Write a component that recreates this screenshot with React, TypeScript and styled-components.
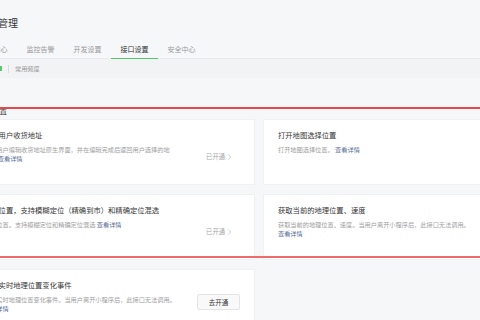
import React from 'react';
import styled, { createGlobalStyle, css } from 'styled-components';

const GlobalStyle = createGlobalStyle`
  html, body {
    margin: 0;
    padding: 0;
    background: #f6f7f9;
  }
  body {
    font-family: "Noto Sans CJK SC", "Noto Sans", sans-serif;
  }
`;

const Viewport = styled.div`
  position: relative;
  width: 480px;
  height: 320px;
  overflow: hidden;
  background: #f6f7f9;
`;

const Page = styled.div`
  margin-left: -30px;
  width: 580px;
`;

const Header = styled.header`
  padding-top: 15px;
`;

const Title = styled.h1`
  margin: 0 0 10px 8px;
  font-size: 10px;
  line-height: 15px;
  font-weight: 400;
  color: #333;
`;

const Tabs = styled.nav`
  display: flex;
  border-bottom: 1px solid #e8e9ec;
`;

const Tab = styled.div<{ $active?: boolean }>`
  position: relative;
  padding: 0 9.5px;
  height: 18px;
  line-height: 18px;
  font-size: 7px;
  color: ${(p) => (p.$active ? '#333' : '#9a9a9a')};
  ${(p) =>
    p.$active &&
    css`
      &::after {
        content: '';
        position: absolute;
        left: 0;
        right: 0;
        bottom: -1px;
        height: 1.5px;
        background: #56c46b;
      }
    `}
`;

const SubBar = styled.div`
  display: flex;
  align-items: center;
  height: 19px;
  padding-left: 28px;
  background: #f2f3f5;
`;

const Mark = styled.span`
  width: 4px;
  height: 5px;
  background: #5cc56d;
`;

const Divider = styled.span`
  width: 1px;
  height: 8px;
  margin-left: 6px;
  background: #dcdde0;
`;

const SubLabel = styled.span`
  margin-left: 6px;
  font-size: 6.2px;
  color: #999;
`;

const Section = styled.section`
  padding-top: 27.5px;
`;

const SectionTitle = styled.h2`
  margin: 0 0 4.5px 7px;
  font-size: 7.5px;
  line-height: 10px;
  font-weight: 400;
  color: #333;
`;

const Grid = styled.div`
  display: grid;
  grid-template-columns: 284px 284px;
  grid-auto-rows: 64px;
  column-gap: 10px;
  row-gap: 11px;
`;

const Card = styled.div`
  display: flex;
  justify-content: space-between;
  align-items: flex-start;
  padding: 9.5px 14px 0 14px;
  background: #fff;
  box-shadow: 0 0 0 1px rgba(0, 0, 0, 0.025);
`;

const Body = styled.div`
  width: 195px;
  flex: none;
`;

const CardTitle = styled.div`
  font-size: 7.3px;
  line-height: 10px;
  color: #353535;
  white-space: nowrap;
`;

const Desc = styled.div`
  margin-top: 5.5px;
  font-size: 6.2px;
  line-height: 9px;
  color: #a0a0a0;
`;

const More = styled.a`
  color: #576b95;
  text-decoration: none;
`;

const Status = styled.div`
  align-self: center;
  display: flex;
  align-items: center;
  gap: 3px;
  margin-right: 9px;
  font-size: 6.3px;
  color: #a6a6a6;
`;

const OpenButton = styled.button`
  align-self: center;
  width: 43px;
  height: 16px;
  margin-top: -9.5px;
  padding: 0;
  border: 1px solid #e3e4e6;
  border-radius: 2px;
  background: #f9f9fa;
  font-family: inherit;
  font-size: 6.5px;
  color: #333;
`;

const RedLine = styled.div<{ $top: number; $h: number; $color: string }>`
  position: absolute;
  left: 0;
  right: 0;
  top: ${(p) => p.$top}px;
  height: ${(p) => p.$h}px;
  background: ${(p) => p.$color};
`;

const Chevron = () => (
  <svg width="3" height="6" viewBox="0 0 3 6" fill="none">
    <polyline points="0.4,0.4 2.6,3 0.4,5.6" stroke="#b0b0b0" strokeWidth="0.6" />
  </svg>
);

type Api = {
  title: string;
  desc: string;
  state: 'open' | 'closed' | 'none';
};

const apis: Api[] = [
  {
    title: '获取用户收货地址',
    desc: '调起用户编辑收货地址原生界面，并在编辑完成后返回用户选择的地址。',
    state: 'open',
  },
  { title: '打开地图选择位置', desc: '打开地图选择位置。', state: 'none' },
  {
    title: '选择位置，支持模糊定位（精确到市）和精确定位混选',
    desc: '选择位置。支持模糊定位和精确定位混选',
    state: 'open',
  },
  {
    title: '获取当前的地理位置、速度',
    desc: '获取当前的地理位置、速度。当用户离开小程序后，此接口无法调用。',
    state: 'none',
  },
  {
    title: '监听实时地理位置变化事件',
    desc: '监听实时地理位置变化事件。当用户离开小程序后，此接口无法调用。',
    state: 'closed',
  },
];

const tabs = ['运维中心', '监控告警', '开发设置', '接口设置', '安全中心'];

export default function App() {
  return (
    <Viewport>
      <GlobalStyle />
      <Page>
        <Header>
          <Title>开发管理</Title>
          <Tabs>
            {tabs.map((t) => (
              <Tab key={t} $active={t === '接口设置'}>
                {t}
              </Tab>
            ))}
          </Tabs>
        </Header>
        <SubBar>
          <Mark />
          <Divider />
          <SubLabel>常用频度</SubLabel>
        </SubBar>
        <Section>
          <SectionTitle>地理位置</SectionTitle>
          <Grid>
            {apis.map((a) => (
              <Card key={a.title}>
                <Body>
                  <CardTitle>{a.title}</CardTitle>
                  <Desc>
                    {a.desc} <More href="#">查看详情</More>
                  </Desc>
                </Body>
                {a.state === 'open' && (
                  <Status>
                    已开通
                    <Chevron />
                  </Status>
                )}
                {a.state === 'closed' && <OpenButton>去开通</OpenButton>}
              </Card>
            ))}
          </Grid>
        </Section>
      </Page>
      <RedLine $top={107} $h={1.5} $color="#e34a4f" />
      <RedLine $top={256} $h={2} $color="#f06c6c" />
    </Viewport>
  );
}
